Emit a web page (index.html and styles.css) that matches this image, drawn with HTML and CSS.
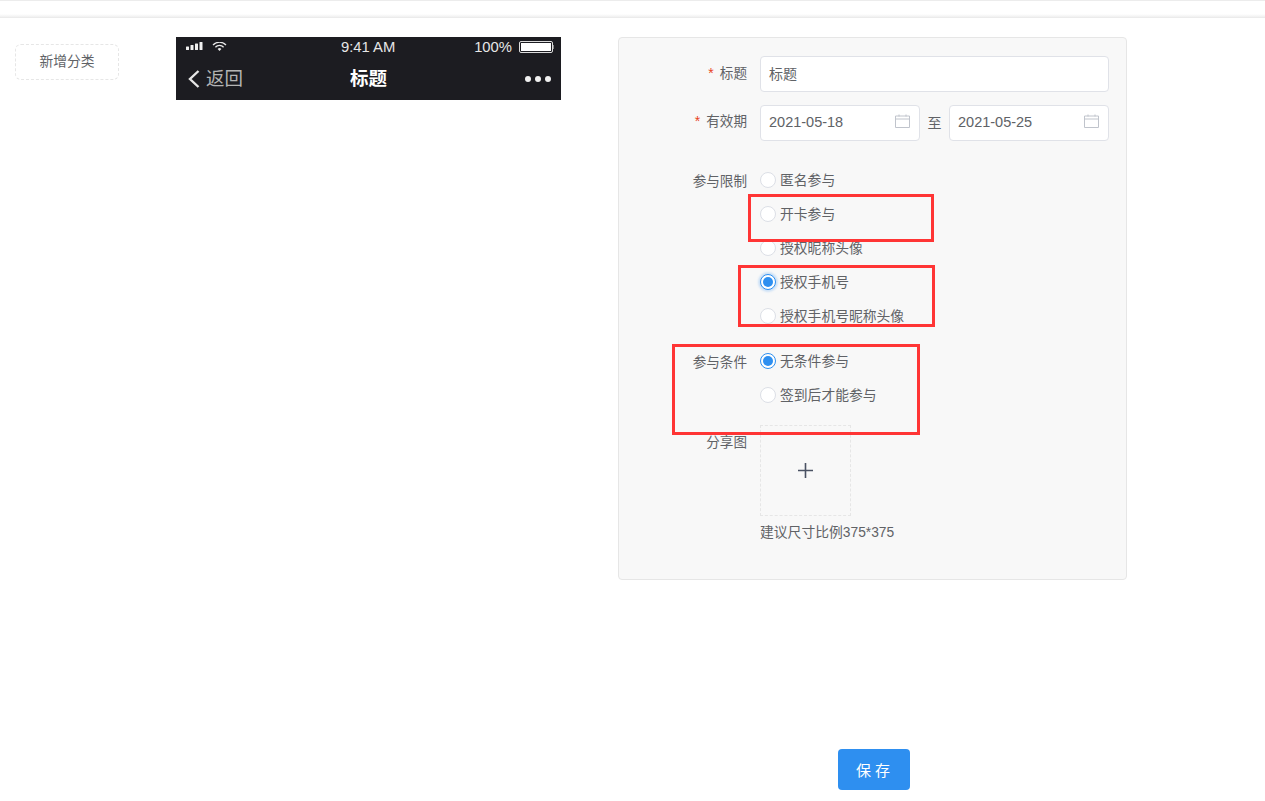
FILE: index.html
```html
<!DOCTYPE html>
<html lang="zh-CN">
<head>
<meta charset="utf-8">
<title>活动编辑</title>
<link rel="stylesheet" href="styles.css">
</head>
<body>
<div class="page">
  <div class="topbar"></div>
  <main class="main">
    <aside class="side">
      <button class="add-btn" type="button">新增分类</button>
    </aside>
    <section class="phone">
      <div class="status">
        <div class="status-left">
          <svg class="signal" width="20" height="8" viewBox="0 0 20 8"><rect x="0" y="4.5" width="3" height="3.5" rx=".5"/><rect x="4.5" y="3" width="3" height="5" rx=".5"/><rect x="9" y="1.5" width="3" height="6.5" rx=".5"/><rect x="13.5" y="0" width="3" height="8" rx=".5"/></svg>
          <svg class="wifi" width="15" height="9" viewBox="0 0 15 9"><path d="M1 3a9 9 0 0 1 13 0M3.4 5.2a5.6 5.6 0 0 1 8.2 0" fill="none" stroke="#e8e8e8" stroke-width="1.3"/><path d="M5.6 7a2.6 2.6 0 0 1 3.8 0L7.5 9z" fill="#e8e8e8"/></svg>
        </div>
        <div class="clock">9:41 AM</div>
        <div class="status-right">
          <span class="pct">100%</span>
          <span class="battery"><span class="battery-fill"></span></span>
          <span class="battery-tip"></span>
        </div>
      </div>
      <div class="nav">
        <div class="back">
          <svg width="14" height="20" viewBox="0 0 14 20"><path d="M11.5 2 3 10l8.5 8" fill="none" stroke="#e6e6e6" stroke-width="2.4"/></svg>
          <span>返回</span>
        </div>
        <div class="nav-title">标题</div>
        <div class="dots"><i></i><i></i><i></i></div>
      </div>
    </section>
    <section class="panel">
      <div class="row">
        <label class="label"><span class="req">*</span>标题</label>
        <div class="input">标题</div>
      </div>
      <div class="row row-date">
        <label class="label label-date"><span class="req">*</span>有效期</label>
        <div class="dates">
          <div class="input date">2021-05-18
            <svg class="cal" width="15" height="14" viewBox="0 0 15 14"><path d="M.5 2h14v11.5H.5zM.5 5h14M4 .5v2M11 .5v2" fill="none" stroke="#c0c4cc"/></svg>
          </div>
          <span class="to">至</span>
          <div class="input date">2021-05-25
            <svg class="cal" width="15" height="14" viewBox="0 0 15 14"><path d="M.5 2h14v11.5H.5zM.5 5h14M4 .5v2M11 .5v2" fill="none" stroke="#c0c4cc"/></svg>
          </div>
        </div>
      </div>
      <div class="row row-limit">
        <label class="label label-radio">参与限制</label>
        <div class="radios">
          <div class="radio"><span class="dot"></span>匿名参与</div>
          <div class="radio"><span class="dot"></span>开卡参与</div>
          <div class="radio"><span class="dot"></span>授权昵称头像</div>
          <div class="radio"><span class="dot on focus"></span>授权手机号</div>
          <div class="radio"><span class="dot"></span>授权手机号昵称头像</div>
        </div>
      </div>
      <div class="row row-cond">
        <label class="label label-radio">参与条件</label>
        <div class="radios">
          <div class="radio"><span class="dot on"></span>无条件参与</div>
          <div class="radio"><span class="dot"></span>签到后才能参与</div>
        </div>
      </div>
      <div class="row row-upload">
        <label class="label label-upload">分享图</label>
        <div>
          <div class="upload"><svg width="15" height="15" viewBox="0 0 15 15"><path d="M7.5 0v15M0 7.5h15" stroke="#4a5263" stroke-width="1.6"/></svg></div>
          <div class="hint">建议尺寸比例375*375</div>
        </div>
      </div>
    </section>
  </main>
  <footer class="footer">
    <button class="save" type="button">保 存</button>
  </footer>
  <div class="mark mark-a"></div>
  <div class="mark mark-b"></div>
  <div class="mark mark-c"></div>
</div>
</body>
</html>
```
FILE: styles.css
```css
* { box-sizing: border-box; }
html, body { margin: 0; padding: 0; background: #fff; }
body {
  font-family: "Liberation Sans", "Noto Sans CJK SC", sans-serif;
  font-size: 14px;
  color: #606266;
  overflow: hidden;
}
.page { position: relative; width: 1265px; height: 801px; }
.topbar {
  height: 18px;
  border-top: 1px solid #ececec;
  background: linear-gradient(#fff 0, #fff 13px, #f0f0f0 16px, #e6e6e6 17px);
}
.main { display: flex; align-items: flex-start; padding: 19px 0 0 15px; }
.side { width: 104px; padding-top: 7px; }
.add-btn {
  width: 104px; height: 36px; padding: 0 0 4px;
  border: 1px dashed #e6e6e6; border-radius: 6px; background: #fff;
  font: inherit; font-size: 13.8px; color: #606266;
}
.phone { width: 385px; height: 63px; margin-left: 57px; background: #1c1c21; color: #e6e6e6; }
.status { position: relative; height: 20px; display: flex; justify-content: space-between; align-items: center; padding: 0 7px 0 10px; }
.status-left { display: flex; align-items: center; gap: 9px; margin-top: -2px; }
.signal { fill: #f0f0f0; margin-right: -3px; }
.clock { position: absolute; left: 165px; top: 3px; font-size: 14.8px; line-height: 15px; }
.status-right { display: flex; align-items: center; }
.pct { font-size: 14.8px; line-height: 15px; margin-right: 7px; }
.battery { width: 34px; height: 12px; border: 1px solid #ddd; border-radius: 2px; padding: 1px; display: block; }
.battery-fill { display: block; height: 100%; background: #fff; }
.battery-tip { width: 1px; height: 4px; background: #888; }
.nav { position: relative; height: 43px; display: flex; align-items: center; justify-content: space-between; padding: 0 10px 0 11px; }
.back { display: flex; align-items: center; gap: 5px; font-size: 18.5px; line-height: 24px; color: #b4b4b4; }
.nav-title { position: absolute; left: 174px; top: 9px; font-size: 18.5px; line-height: 26px; font-weight: 700; color: #fff; }
.dots { display: flex; gap: 4px; }
.dots i { width: 6px; height: 6px; border-radius: 50%; background: #f0f0f0; display: block; }
.panel {
  width: 509px; height: 543px; margin-left: 57px; padding: 18px 17px 0 0;
  background: #f8f8f8; border: 1px solid #e6e6e6; border-radius: 4px;
}
.row { display: grid; grid-template-columns: 128px 1fr; column-gap: 13px; }
.row-date { margin-top: 13px; }
.row-limit { margin-top: 22px; }
.row-cond { margin-top: 11px; }
.row-upload { margin-top: 13px; }
.label { text-align: right; font-size: 13.6px; line-height: 34px; color: #606266; }
.label-date { line-height: 32px; }
.label-radio { line-height: 37px; }
.label-upload { line-height: 36px; }
.req { color: #e8431f; margin-right: 6px; font-size: 14px; }
.input {
  height: 36px; padding: 0 8px; line-height: 34px;
  background: #fff; border: 1px solid #e0e2e8; border-radius: 4px; font-size: 14px; color: #606266;
}
.dates { display: flex; align-items: center; }
.date { position: relative; width: 160px; font-size: 14.5px; line-height: 33px; }
.cal { position: absolute; right: 9px; top: 8px; }
.to { width: 29px; text-align: center; font-size: 14px; padding-bottom: 2px; }
.radio { display: flex; align-items: center; height: 34px; padding-top: 2px; font-size: 13.8px; line-height: 32px; color: #606266; }
.dot {
  position: relative; width: 16px; height: 16px; margin: 0 4px 2px 0; flex: none;
  border: 1px solid #dcdfe6; border-radius: 50%; background: #fff;
}
.dot.on { border-color: #2e8ff0; }
.dot.on::after {
  content: ""; position: absolute; left: 2px; top: 2px; width: 10px; height: 10px;
  border-radius: 50%; background: #2e8ff0;
}
.dot.focus { box-shadow: 0 0 2px 2px rgba(46, 143, 240, .22); }
.upload {
  width: 91px; height: 91px; display: flex; align-items: center; justify-content: center;
  border: 1px dashed #e6e6e6; border-radius: 0;
}
.hint { margin-top: 7px; line-height: 20px; font-size: 13.8px; }
.footer { padding: 169px 0 0 838px; }
.save {
  width: 72px; height: 41px; padding: 0 2px 0 0;
  border: 0; border-radius: 4px; background: #2e8ff0; color: #fff;
  font: inherit; font-size: 15px;
}
.mark { position: absolute; border: 3px solid #ff3535; pointer-events: none; }
.mark-a { left: 748px; top: 194px; width: 186px; height: 48px; }
.mark-b { left: 738px; top: 265px; width: 197px; height: 62px; }
.mark-c { left: 672px; top: 344px; width: 248px; height: 91px; }
```
